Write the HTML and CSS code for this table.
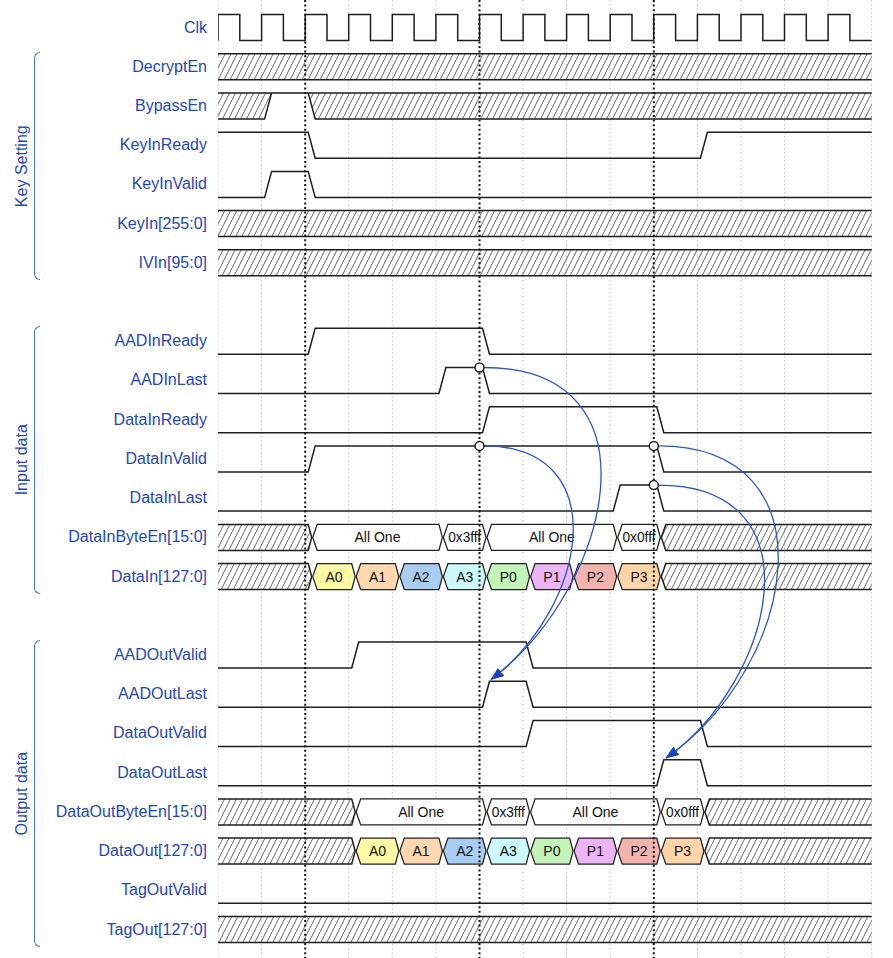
FILE: index.html
```html
<!DOCTYPE html>
<html lang="en">
<head>
<meta charset="utf-8">
<title>AES-GCM Timing Diagram</title>
<link rel="stylesheet" href="styles.css">
</head>
<body>
<div class="diagram">
  <div class="side">
    <div class="group g-key"><span class="group-title">Key Setting</span><span class="bracket"></span></div>
    <div class="group g-in"><span class="group-title">Input data</span><span class="bracket"></span></div>
    <div class="group g-out"><span class="group-title">Output data</span><span class="bracket"></span></div>
    <div class="label">Clk</div>
    <div class="label">DecryptEn</div>
    <div class="label">BypassEn</div>
    <div class="label">KeyInReady</div>
    <div class="label">KeyInValid</div>
    <div class="label">KeyIn[255:0]</div>
    <div class="label">IVIn[95:0]</div>
    <div class="label"></div>
    <div class="label">AADInReady</div>
    <div class="label">AADInLast</div>
    <div class="label">DataInReady</div>
    <div class="label">DataInValid</div>
    <div class="label">DataInLast</div>
    <div class="label">DataInByteEn[15:0]</div>
    <div class="label">DataIn[127:0]</div>
    <div class="label"></div>
    <div class="label">AADOutValid</div>
    <div class="label">AADOutLast</div>
    <div class="label">DataOutValid</div>
    <div class="label">DataOutLast</div>
    <div class="label">DataOutByteEn[15:0]</div>
    <div class="label">DataOut[127:0]</div>
    <div class="label">TagOutValid</div>
    <div class="label">TagOut[127:0]</div>
  </div>
  <svg class="waves" width="675" height="958" viewBox="218 0 675 958" xmlns="http://www.w3.org/2000/svg">
    <defs>
      <pattern id="hatch" width="6" height="12" patternUnits="userSpaceOnUse">
        <path class="hatch-line" d="M-1.5 3L1.5 -3M0 12L6 0M4.5 15L7.5 9"/>
      </pattern>
      <marker id="arrow" viewBox="0 0 13 10" refX="12.5" refY="5" markerWidth="13" markerHeight="10" markerUnits="userSpaceOnUse" orient="auto">
        <path class="arrow-head" d="M0 0L13 5L0 10z"/>
      </marker>
    </defs>

    <!-- light grid -->
    <path class="grid-line" d="M218 0V958M261.6 0V958M348.7 0V958M392.3 0V958M435.9 0V958M523.1 0V958M566.6 0V958M610.2 0V958M697.4 0V958M741 0V958M784.5 0V958M828.1 0V958M871.7 0V958"/>

    <!-- Clk -->
    <path class="wave" d="M218 40.5V14.5H239.8V40.5H261.6V14.5H283.4V40.5H305.2V14.5H327V40.5H348.7V14.5H370.5V40.5H392.3V14.5H414.1V40.5H435.9V14.5H457.7V40.5H479.5V14.5H501.3V40.5H523.1V14.5H544.9V40.5H566.6V14.5H588.4V40.5H610.2V14.5H632V40.5H653.8V14.5H675.6V40.5H697.4V14.5H719.2V40.5H741V14.5H762.8V40.5H784.5V14.5H806.3V40.5H828.1V14.5H849.9V40.5H871.7"/>

    <!-- DecryptEn -->
    <rect class="hatch" x="218" y="53.7" width="653.7" height="26"/>
    <path class="wave" d="M218 53.7H871.7M218 79.7H871.7"/>

    <!-- BypassEn -->
    <polygon class="hatch" points="218,92.9 271.6,92.9 264.6,118.9 218,118.9"/>
    <polygon class="hatch" points="308.2,92.9 871.7,92.9 871.7,118.9 315.2,118.9"/>
    <path class="wave" d="M218 92.9H871.7M218 118.9H264.6L271.6 92.9M308.2 92.9L315.2 118.9H871.7"/>

    <!-- KeyInReady -->
    <path class="wave" d="M218 132.2H308.2L315.2 158.2H700.4L707.4 132.2H871.7"/>
    <!-- KeyInValid -->
    <path class="wave" d="M218 197.4H264.6L271.6 171.4H308.2L315.2 197.4H871.7"/>

    <!-- KeyIn -->
    <rect class="hatch" x="218" y="210.6" width="653.7" height="26"/>
    <path class="wave" d="M218 210.6H871.7M218 236.6H871.7"/>
    <!-- IVIn -->
    <rect class="hatch" x="218" y="249.8" width="653.7" height="26"/>
    <path class="wave" d="M218 249.8H871.7M218 275.8H871.7"/>

    <!-- AADInReady -->
    <path class="wave" d="M218 354.3H308.2L315.2 328.3H482.5L489.5 354.3H871.7"/>
    <!-- AADInLast -->
    <path class="wave" d="M218 393.5H438.9L445.9 367.5H482.5L489.5 393.5H871.7"/>
    <!-- DataInReady -->
    <path class="wave" d="M218 432.7H482.5L489.5 406.7H656.8L663.8 432.7H871.7"/>
    <!-- DataInValid -->
    <path class="wave" d="M218 471.9H308.2L315.2 445.9H656.8L663.8 471.9H871.7"/>
    <!-- DataInLast -->
    <path class="wave" d="M218 511.1H613.2L620.2 485.1H656.8L663.8 511.1H871.7"/>

    <!-- DataInByteEn -->
    <polygon class="hatch" points="218,524.4 308.2,524.4 311.7,537.4 308.2,550.4 218,550.4"/>
    <path class="wave" d="M218 524.4H308.2L311.7 537.4L308.2 550.4H218"/>
    <polygon class="seg c-white" points="312.7,537.4 317.2,524.4 438.9,524.4 442.4,537.4 438.9,550.4 317.2,550.4"/>
    <polygon class="seg c-white" points="443.4,537.4 447.9,524.4 482.5,524.4 486,537.4 482.5,550.4 447.9,550.4"/>
    <polygon class="seg c-white" points="487,537.4 491.5,524.4 613.2,524.4 616.7,537.4 613.2,550.4 491.5,550.4"/>
    <polygon class="seg c-white" points="617.7,537.4 622.2,524.4 656.8,524.4 660.3,537.4 656.8,550.4 622.2,550.4"/>
    <polygon class="hatch" points="661.3,537.4 665.8,524.4 871.7,524.4 871.7,550.4 665.8,550.4"/>
    <path class="wave" d="M871.7 524.4H665.8L661.3 537.4L665.8 550.4H871.7"/>
    <text class="seg-text" x="377.5" y="542.4">All One</text>
    <text class="seg-text" x="464.7" y="542.4" textLength="33" lengthAdjust="spacingAndGlyphs">0x3fff</text>
    <text class="seg-text" x="551.9" y="542.4">All One</text>
    <text class="seg-text" x="639" y="542.4" textLength="33" lengthAdjust="spacingAndGlyphs">0x0fff</text>

    <!-- DataIn -->
    <polygon class="hatch" points="218,563.6 308.2,563.6 311.7,576.6 308.2,589.6 218,589.6"/>
    <path class="wave" d="M218 563.6H308.2L311.7 576.6L308.2 589.6H218"/>
    <polygon class="seg c-a0" points="312.7,576.6 317.2,563.6 351.7,563.6 355.2,576.6 351.7,589.6 317.2,589.6"/>
    <polygon class="seg c-a1" points="356.2,576.6 360.7,563.6 395.3,563.6 398.8,576.6 395.3,589.6 360.7,589.6"/>
    <polygon class="seg c-a2" points="399.8,576.6 404.3,563.6 438.9,563.6 442.4,576.6 438.9,589.6 404.3,589.6"/>
    <polygon class="seg c-a3" points="443.4,576.6 447.9,563.6 482.5,563.6 486,576.6 482.5,589.6 447.9,589.6"/>
    <polygon class="seg c-p0" points="487,576.6 491.5,563.6 526.1,563.6 529.6,576.6 526.1,589.6 491.5,589.6"/>
    <polygon class="seg c-p1" points="530.6,576.6 535.1,563.6 569.6,563.6 573.1,576.6 569.6,589.6 535.1,589.6"/>
    <polygon class="seg c-p2" points="574.1,576.6 578.6,563.6 613.2,563.6 616.7,576.6 613.2,589.6 578.6,589.6"/>
    <polygon class="seg c-p3" points="617.7,576.6 622.2,563.6 656.8,563.6 660.3,576.6 656.8,589.6 622.2,589.6"/>
    <polygon class="hatch" points="661.3,576.6 665.8,563.6 871.7,563.6 871.7,589.6 665.8,589.6"/>
    <path class="wave" d="M871.7 563.6H665.8L661.3 576.6L665.8 589.6H871.7"/>
    <text class="seg-text" x="334" y="581.6">A0</text>
    <text class="seg-text" x="377.5" y="581.6">A1</text>
    <text class="seg-text" x="421.1" y="581.6">A2</text>
    <text class="seg-text" x="464.7" y="581.6">A3</text>
    <text class="seg-text" x="508.3" y="581.6">P0</text>
    <text class="seg-text" x="551.9" y="581.6">P1</text>
    <text class="seg-text" x="595.4" y="581.6">P2</text>
    <text class="seg-text" x="639" y="581.6">P3</text>

    <!-- AADOutValid -->
    <path class="wave" d="M218 668H351.7L358.7 642H526.1L533.1 668H871.7"/>
    <!-- AADOutLast -->
    <path class="wave" d="M218 707.2H482.5L489.5 681.2H526.1L533.1 707.2H871.7"/>
    <!-- DataOutValid -->
    <path class="wave" d="M218 746.5H526.1L533.1 720.5H700.4L707.4 746.5H871.7"/>
    <!-- DataOutLast -->
    <path class="wave" d="M218 785.7H656.8L663.8 759.7H700.4L707.4 785.7H871.7"/>

    <!-- DataOutByteEn -->
    <polygon class="hatch" points="218,798.9 351.7,798.9 355.2,811.9 351.7,824.9 218,824.9"/>
    <path class="wave" d="M218 798.9H351.7L355.2 811.9L351.7 824.9H218"/>
    <polygon class="seg c-white" points="356.2,811.9 360.7,798.9 482.5,798.9 486,811.9 482.5,824.9 360.7,824.9"/>
    <polygon class="seg c-white" points="487,811.9 491.5,798.9 526.1,798.9 529.6,811.9 526.1,824.9 491.5,824.9"/>
    <polygon class="seg c-white" points="530.6,811.9 535.1,798.9 656.8,798.9 660.3,811.9 656.8,824.9 535.1,824.9"/>
    <polygon class="seg c-white" points="661.3,811.9 665.8,798.9 700.4,798.9 703.9,811.9 700.4,824.9 665.8,824.9"/>
    <polygon class="hatch" points="704.9,811.9 709.4,798.9 871.7,798.9 871.7,824.9 709.4,824.9"/>
    <path class="wave" d="M871.7 798.9H709.4L704.9 811.9L709.4 824.9H871.7"/>
    <text class="seg-text" x="421.1" y="816.9">All One</text>
    <text class="seg-text" x="508.3" y="816.9" textLength="33" lengthAdjust="spacingAndGlyphs">0x3fff</text>
    <text class="seg-text" x="595.4" y="816.9">All One</text>
    <text class="seg-text" x="682.6" y="816.9" textLength="33" lengthAdjust="spacingAndGlyphs">0x0fff</text>

    <!-- DataOut -->
    <polygon class="hatch" points="218,838.1 351.7,838.1 355.2,851.1 351.7,864.1 218,864.1"/>
    <path class="wave" d="M218 838.1H351.7L355.2 851.1L351.7 864.1H218"/>
    <polygon class="seg c-a0" points="356.2,851.1 360.7,838.1 395.3,838.1 398.8,851.1 395.3,864.1 360.7,864.1"/>
    <polygon class="seg c-a1" points="399.8,851.1 404.3,838.1 438.9,838.1 442.4,851.1 438.9,864.1 404.3,864.1"/>
    <polygon class="seg c-a2" points="443.4,851.1 447.9,838.1 482.5,838.1 486,851.1 482.5,864.1 447.9,864.1"/>
    <polygon class="seg c-a3" points="487,851.1 491.5,838.1 526.1,838.1 529.6,851.1 526.1,864.1 491.5,864.1"/>
    <polygon class="seg c-p0" points="530.6,851.1 535.1,838.1 569.6,838.1 573.1,851.1 569.6,864.1 535.1,864.1"/>
    <polygon class="seg c-p1" points="574.1,851.1 578.6,838.1 613.2,838.1 616.7,851.1 613.2,864.1 578.6,864.1"/>
    <polygon class="seg c-p2" points="617.7,851.1 622.2,838.1 656.8,838.1 660.3,851.1 656.8,864.1 622.2,864.1"/>
    <polygon class="seg c-p3" points="661.3,851.1 665.8,838.1 700.4,838.1 703.9,851.1 700.4,864.1 665.8,864.1"/>
    <polygon class="hatch" points="704.9,851.1 709.4,838.1 871.7,838.1 871.7,864.1 709.4,864.1"/>
    <path class="wave" d="M871.7 838.1H709.4L704.9 851.1L709.4 864.1H871.7"/>
    <text class="seg-text" x="377.5" y="856.1">A0</text>
    <text class="seg-text" x="421.1" y="856.1">A1</text>
    <text class="seg-text" x="464.7" y="856.1">A2</text>
    <text class="seg-text" x="508.3" y="856.1">A3</text>
    <text class="seg-text" x="551.9" y="856.1">P0</text>
    <text class="seg-text" x="595.4" y="856.1">P1</text>
    <text class="seg-text" x="639" y="856.1">P2</text>
    <text class="seg-text" x="682.6" y="856.1">P3</text>

    <!-- TagOutValid -->
    <path class="wave" d="M218 903.3H871.7"/>
    <!-- TagOut -->
    <rect class="hatch" x="218" y="916.6" width="653.7" height="26"/>
    <path class="wave" d="M218 916.6H871.7M218 942.6H871.7"/>

    <!-- cycle markers -->
    <path class="marker-line" d="M305.2 0V958M479.5 0V958M653.8 0V958"/>

    <!-- dependency arcs -->
    <path class="arc" d="M484 367.5C665 367.5 611 589.5 491 679.5"/>
    <path class="arc" d="M484 445.9C616 445.9 587 607.5 491 679.5"/>
    <path class="arc" d="M658.3 445.9C836 445.9 797 666.8 666 758"/>
    <path class="arc" d="M658.3 485.1C823 485.1 772.6 683.9 666 758"/>

    <circle class="dot" cx="479.5" cy="367.5" r="4.5"/>
    <circle class="dot" cx="479.5" cy="445.9" r="4.5"/>
    <circle class="dot" cx="653.8" cy="445.9" r="4.5"/>
    <circle class="dot" cx="653.8" cy="485.1" r="4.5"/>
  </svg>
</div>
</body>
</html>
```
FILE: styles.css
```css
html, body {
  margin: 0;
  padding: 0;
  background: #ffffff;
}

.diagram {
  display: flex;
  width: 893px;
  height: 958px;
  overflow: hidden;
  font-family: "Liberation Sans", Arial, sans-serif;
}

.side {
  flex: none;
  width: 218px;
  box-sizing: border-box;
  padding-top: 14.5px;
  display: grid;
  grid-template-columns: 40px 1fr;
  grid-template-rows: repeat(24, 39.22px);
  align-content: start;
}

.label {
  grid-column: 2;
  align-self: start;
  height: 26px;
  line-height: 26px;
  padding-right: 11px;
  text-align: right;
  font-size: 16px;
  color: #2448b2;
  white-space: nowrap;
}

.group {
  grid-column: 1;
  display: flex;
  margin: -2px 0 9.2px 0;
  padding-left: 12px;
}

.g-key { grid-row: 2 / 8; }
.g-in { grid-row: 9 / 16; }
.g-out { grid-row: 17 / 25; }

.group-title {
  width: 20px;
  line-height: 20px;
  writing-mode: vertical-rl;
  transform: rotate(180deg);
  text-align: center;
  font-size: 16px;
  color: #2448b2;
  white-space: nowrap;
}

.bracket {
  width: 5px;
  margin-left: 1.5px;
  border: 1.5px solid #4a72d0;
  border-right: none;
  border-radius: 6px 0 0 6px;
}

.waves {
  flex: none;
  display: block;
}

.grid-line {
  fill: none;
  stroke: #c6c6c6;
  stroke-width: 1;
  stroke-dasharray: 1.5 2.5;
}

.marker-line {
  fill: none;
  stroke: #111111;
  stroke-width: 2;
  stroke-dasharray: 2 2.6;
}

.wave {
  fill: none;
  stroke: #1e1e1e;
  stroke-width: 1.5;
  stroke-linejoin: miter;
}

.hatch {
  fill: url(#hatch);
  stroke: none;
}

.hatch-line {
  stroke: #555555;
  stroke-width: 0.9;
  fill: none;
}

.seg {
  stroke: #222222;
  stroke-width: 1.3;
}

.c-white { fill: #ffffff; }
.c-a0 { fill: #fdf9a4; }
.c-a1 { fill: #ffd7b0; }
.c-a2 { fill: #a9cdf2; }
.c-a3 { fill: #cdf9fb; }
.c-p0 { fill: #c3f3b8; }
.c-p1 { fill: #ebb5f3; }
.c-p2 { fill: #f2b3ae; }
.c-p3 { fill: #fed5a8; }

.seg-text {
  font-family: "Liberation Sans", Arial, sans-serif;
  font-size: 14px;
  fill: #111111;
  text-anchor: middle;
}

.arc {
  fill: none;
  stroke: #2c55c4;
  stroke-width: 1.3;
  marker-end: url(#arrow);
}

.arrow-head {
  fill: #1743c4;
}

.dot {
  fill: #ffffff;
  stroke: #1e1e1e;
  stroke-width: 1.5;
}
```
